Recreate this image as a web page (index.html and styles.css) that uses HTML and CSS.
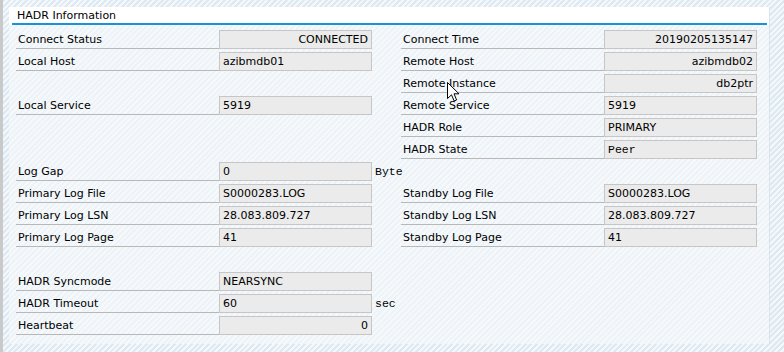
FILE: index.html
```html
<!DOCTYPE html>
<html>
<head>
<meta charset="utf-8">
<link rel="stylesheet" href="styles.css">
</head>
<body>
<div class="screen">
  <div class="edge"></div>
  <div class="area">
    <div class="panel">
      <div class="panel-head"><span class="title">HADR Information</span></div>
      <div class="grid">
        <div class="lbl">Connect Status</div><div class="val r">CONNECTED</div><div class="unit"></div><div class="lbl">Connect Time</div><div class="val r">20190205135147</div>
        <div class="lbl">Local Host</div><div class="val">azibmdb01</div><div class="unit"></div><div class="lbl">Remote Host</div><div class="val r">azibmdb02</div>
        <div class="none"></div><div class="none"></div><div class="unit"></div><div class="lbl">Remote Instance</div><div class="val r">db2ptr</div>
        <div class="lbl">Local Service</div><div class="val">5919</div><div class="unit"></div><div class="lbl">Remote Service</div><div class="val">5919</div>
        <div class="none"></div><div class="none"></div><div class="unit"></div><div class="lbl">HADR Role</div><div class="val">PRIMARY</div>
        <div class="none"></div><div class="none"></div><div class="unit"></div><div class="lbl">HADR State</div><div class="val mono">Peer</div>
        <div class="lbl">Log Gap</div><div class="val">0</div><div class="unit">Byte</div><div class="none"></div><div class="none"></div>
        <div class="lbl">Primary Log File</div><div class="val">S0000283.LOG</div><div class="unit"></div><div class="lbl">Standby Log File</div><div class="val">S0000283.LOG</div>
        <div class="lbl">Primary Log LSN</div><div class="val">28.083.809.727</div><div class="unit"></div><div class="lbl">Standby Log LSN</div><div class="val">28.083.809.727</div>
        <div class="lbl">Primary Log Page</div><div class="val">41</div><div class="unit"></div><div class="lbl">Standby Log Page</div><div class="val">41</div>
        <div class="none"></div><div class="none"></div><div class="unit"></div><div class="none"></div><div class="none"></div>
        <div class="lbl">HADR Syncmode</div><div class="val">NEARSYNC</div><div class="unit"></div><div class="none"></div><div class="none"></div>
        <div class="lbl">HADR Timeout</div><div class="val">60</div><div class="unit">sec</div><div class="none"></div><div class="none"></div>
        <div class="lbl">Heartbeat</div><div class="val r">0</div><div class="unit"></div><div class="none"></div><div class="none"></div>
      </div>
      <svg class="cursor" width="13" height="20" viewBox="0 0 13 20">
        <path d="M0.5 0.5 L0.5 16.5 L4.5 12.8 L7.2 19 L9.6 18 L7 11.8 L12 11.8 Z" fill="#fff" stroke="#000" stroke-width="1" stroke-linejoin="miter"/>
      </svg>
    </div>
  </div>
</div>
</body>
</html>
```
FILE: styles.css
```css
html, body {
  margin: 0;
  padding: 0;
}
body {
  width: 784px;
  height: 352px;
  overflow: hidden;
  font-family: "DejaVu Sans", Verdana, sans-serif;
  font-size: 11px;
  color: #000;
}
.screen {
  display: flex;
  width: 784px;
  height: 352px;
  background: repeating-linear-gradient(135deg, #f4f8fb 0px, #f4f8fb 2px, #dde9f3 2px, #dde9f3 4px);
}
.edge {
  width: 3px;
  flex: none;
  background: #c9c9c9;
}
.area {
  flex: 1;
  padding: 7px 0 0 6px;
}
.panel {
  position: relative;
  width: 760px;
  height: 337px;
  border-right: 1px solid #dbe4ea;
  background: repeating-linear-gradient(135deg, #f6f9fb 0px, #f6f9fb 2px, #edf3f7 2px, #edf3f7 4px);
}
.panel-head {
  height: 18px;
  background: #fff;
  padding: 0 2px 0 3px;
}
.title {
  display: block;
  height: 16px;
  line-height: 17px;
  padding-left: 5px;
  border-bottom: 2px solid #1894d4;
}
.grid {
  display: grid;
  grid-template-columns: 203px 153px 29px 203px 153px;
  grid-auto-rows: 19px;
  row-gap: 3px;
  padding: 5px 0 0 7px;
}
.lbl {
  border-bottom: 1px solid #b8b8b8;
  line-height: 20px;
  padding-left: 2px;
  white-space: nowrap;
}
.val {
  background: #ebebeb;
  border: 1px solid #c6c6c6;
  line-height: 18px;
  padding: 0 3px;
  white-space: nowrap;
}
.val.r {
  text-align: right;
}
.mono, .unit {
  font-family: "Liberation Mono", "Courier New", monospace;
  font-size: 11.5px;
}
.unit {
  line-height: 20px;
  padding-left: 3px;
}
.cursor {
  position: absolute;
  left: 438px;
  top: 75px;
}
```
